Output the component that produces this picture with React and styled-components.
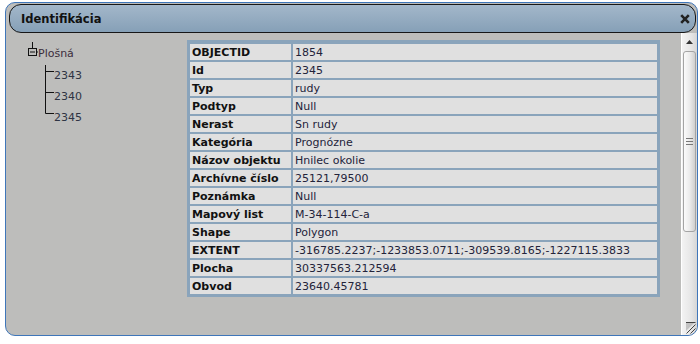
import React from 'react';
import styled, { createGlobalStyle } from 'styled-components';

const GlobalStyle = createGlobalStyle`
  html, body {
    margin: 0;
    padding: 0;
    background: #fff;
  }
  body {
    font-family: "DejaVu Sans", Verdana, sans-serif;
  }
`;

const rows = [
  ['OBJECTID', '1854'],
  ['Id', '2345'],
  ['Typ', 'rudy'],
  ['Podtyp', 'Null'],
  ['Nerast', 'Sn rudy'],
  ['Kategória', 'Prognózne'],
  ['Názov objektu', 'Hnilec okolie'],
  ['Archívne číslo', '25121,79500'],
  ['Poznámka', 'Null'],
  ['Mapový list', 'M-34-114-C-a'],
  ['Shape', 'Polygon'],
  ['EXTENT', '-316785.2237;-1233853.0711;-309539.8165;-1227115.3833'],
  ['Plocha', '30337563.212594'],
  ['Obvod', '23640.45781'],
];

const children = ['2343', '2340', '2345'];

const App = () => {
  return (
    <>
      <GlobalStyle />
      <Window>
        <TitleBar>
          <Title>Identifikácia</Title>
          <CloseButton>
            <svg width="10" height="10" viewBox="0 0 10 10">
              <path d="M1.2 1.2L8.8 8.8M8.8 1.2L1.2 8.8" stroke="#222" strokeWidth="2.6" />
            </svg>
          </CloseButton>
        </TitleBar>
        <Body>
          <Content>
            <Tree>
              <TreeRoot>
                <svg width="12" height="19" viewBox="0 0 12 19">
                  <path d="M6.5 0V6" stroke="#111" strokeWidth="1" />
                  <rect x="2.5" y="6.5" width="8" height="7" fill="none" stroke="#111" strokeWidth="1" />
                  <path d="M4 10H9M10.5 10H12" stroke="#111" strokeWidth="1" />
                </svg>
                <RootLabel>Plošná</RootLabel>
              </TreeRoot>
              <ChildList>
                {children.map((c, i) => (
                  <TreeChild key={c}>
                    <svg width="9" height="21" viewBox="0 0 9 21">
                      <path
                        d={i === children.length - 1 ? 'M0.5 0V6.5H9' : 'M0.5 0V21M0.5 6.5H9'}
                        fill="none"
                        stroke="#111"
                        strokeWidth="1"
                      />
                    </svg>
                    <ChildLabel>{c}</ChildLabel>
                  </TreeChild>
                ))}
              </ChildList>
            </Tree>
            <Table>
              <tbody>
                {rows.map(([k, v]) => (
                  <tr key={k}>
                    <Cell $head>{k}</Cell>
                    <Cell>{v}</Cell>
                  </tr>
                ))}
              </tbody>
            </Table>
          </Content>
          <Scrollbar>
            <ScrollButton>
              <svg width="7" height="4" viewBox="0 0 7 4">
                <path d="M3.5 0L7 4H0Z" fill="#333" />
              </svg>
            </ScrollButton>
            <Thumb>
              <Grip />
              <Grip />
              <Grip />
            </Thumb>
            <ResizeGrip>
              <svg width="13" height="13" viewBox="0 0 13 13">
                <path d="M3 1H12L3 10Z" fill="#777" opacity="0.35" />
                <path d="M12.5 3.5L3.5 12.5M12.5 7.5L7.5 12.5M12.5 11L11 12.5M3 1.5H12.5" stroke="#444" strokeWidth="1" />
              </svg>
            </ResizeGrip>
          </Scrollbar>
        </Body>
      </Window>
    </>
  );
};

const Window = styled.div`
  box-sizing: border-box;
  width: 693px;
  height: 334px;
  margin: 2px 0 0 5px;
  border: 1px solid #3f76b9;
  border-radius: 10px;
  background: #bdbdbb;
  display: flex;
  flex-direction: column;
  overflow: hidden;
`;

const TitleBar = styled.div`
  box-sizing: border-box;
  height: 29px;
  margin: 1px 1px 0 3px;
  padding: 0 5px 0 11px;
  border: 1px solid #171717;
  border-radius: 12px;
  background: linear-gradient(#a3b7ca, #86a0b7);
  display: flex;
  align-items: center;
  justify-content: space-between;
`;

const Title = styled.span`
  font-size: 11.5px;
  font-weight: bold;
  color: #111;
`;

const CloseButton = styled.span`
  display: flex;
  cursor: pointer;
`;

const Body = styled.div`
  flex: 1;
  display: flex;
  min-height: 0;
`;

const Content = styled.div`
  flex: 1;
  display: flex;
  align-items: flex-start;
  padding: 7px 0 0 20px;
`;

const Tree = styled.div`
  width: 161px;
  padding-top: 2px;
  font-size: 11px;
`;

const TreeRoot = styled.div`
  display: flex;
  align-items: center;
  height: 19px;
`;

const RootLabel = styled.span`
  color: #3b2d3b;
  line-height: 19px;
  padding-top: 3px;
`;

const ChildList = styled.div`
  margin: 4px 0 0 19px;
`;

const TreeChild = styled.div`
  display: flex;
  align-items: center;
  height: 21px;
`;

const ChildLabel = styled.span`
  color: #2f3444;
  line-height: 21px;
`;

const Table = styled.table`
  border-collapse: separate;
  border-spacing: 2px;
  border: 1px solid #8aa4bb;
  border-top-width: 2px;
  background: #8aa4bb;
  width: 473px;
  font-size: 11px;
`;

const Cell = styled.td`
  width: ${p => (p.$head ? '97px' : 'auto')};
  height: 15px;
  padding: 1px 2px 0;
  line-height: 15px;
  background: #e0e0e0;
  white-space: nowrap;
  font-weight: ${p => (p.$head ? 'bold' : 'normal')};
  color: ${p => (p.$head ? '#111' : '#23233a')};
`;

const Scrollbar = styled.div`
  width: 15px;
  display: flex;
  flex-direction: column;
  align-items: center;
  border-left: 1px solid #fff;
  background: linear-gradient(to right, #f3f3f3, #e6e6e6 60%, #d6d6d6);
`;

const ScrollButton = styled.div`
  height: 18px;
  display: flex;
  align-items: center;
  justify-content: center;
`;

const Thumb = styled.div`
  box-sizing: border-box;
  width: 13px;
  height: 181px;
  border: 1px solid #a4a4a4;
  border-radius: 3px;
  background: linear-gradient(to right, #fbfbfb, #ececec 50%, #cfcfcf);
  display: flex;
  flex-direction: column;
  align-items: center;
  justify-content: center;
  gap: 2px;
`;

const Grip = styled.div`
  width: 7px;
  height: 1px;
  background: #777;
`;

const ResizeGrip = styled.div`
  margin-top: auto;
  align-self: flex-end;
  display: flex;
  padding: 0 1px 1px 0;
`;

export default App;
